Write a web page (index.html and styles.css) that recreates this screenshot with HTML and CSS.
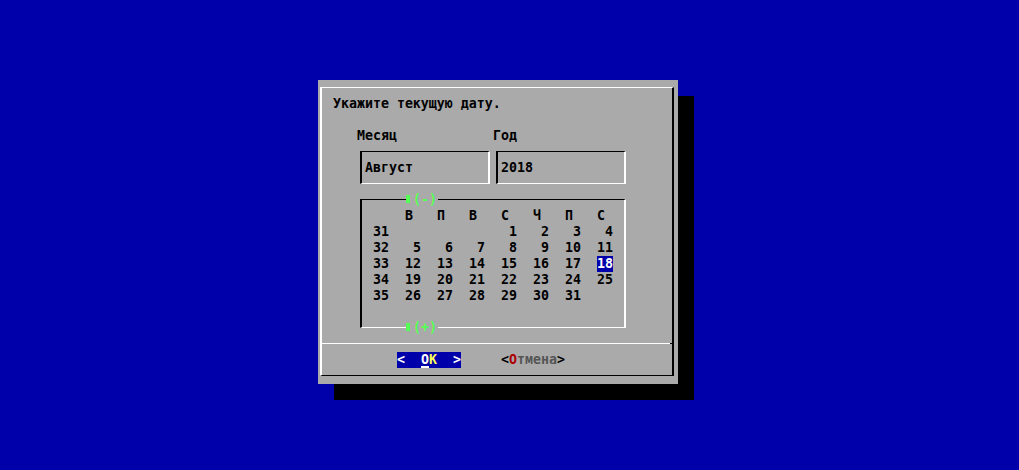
FILE: index.html
```html
<!DOCTYPE html>
<html lang="ru">
<head>
<meta charset="utf-8">
<title>Календарь</title>
<link rel="stylesheet" href="styles.css">
</head>
<body>
<div class="screen">
  <div class="dialog">
    <div class="frame">
      <div class="title">Укажите текущую дату.</div>
      <div class="labels"><span class="label-month">Месяц</span><span class="label-year">Год</span></div>
      <div class="fields">
        <div class="field">Август</div>
        <div class="field">2018</div>
      </div>
      <div class="calendar">
        <div class="scroll scroll-top"><span class="blk"></span><span>(-)</span></div>
        <div class="cal-grid">
          <span></span><span class="hd">В</span><span class="hd">П</span><span class="hd">В</span><span class="hd">С</span><span class="hd">Ч</span><span class="hd">П</span><span class="hd">С</span>
          <span>31</span><span></span><span></span><span></span><span>1</span><span>2</span><span>3</span><span>4</span>
          <span>32</span><span>5</span><span>6</span><span>7</span><span>8</span><span>9</span><span>10</span><span>11</span>
          <span>33</span><span>12</span><span>13</span><span>14</span><span>15</span><span>16</span><span>17</span><span><span class="sel">18</span></span>
          <span>34</span><span>19</span><span>20</span><span>21</span><span>22</span><span>23</span><span>24</span><span>25</span>
          <span>35</span><span>26</span><span>27</span><span>28</span><span>29</span><span>30</span><span>31</span><span></span>
        </div>
        <div class="scroll scroll-bottom"><span class="blk"></span><span>(+)</span></div>
      </div>
      <div class="separator"></div>
      <div class="buttons">
        <span class="btn btn-ok">&lt;  <span class="cursor">O</span><span class="hot-ok">K</span>  &gt;</span>
        <span class="btn btn-cancel">&lt;<span class="hot">О</span><span class="dim">тмена</span>&gt;</span>
      </div>
    </div>
  </div>
</div>
</body>
</html>
```

FILE: styles.css
```css
html, body {
  margin: 0;
  padding: 0;
}

body {
  background: #0000aa;
  width: 1019px;
  height: 470px;
  overflow: hidden;
  font-family: "DejaVu Sans Mono", "Liberation Mono", monospace;
  font-weight: bold;
  font-size: 13.28px;
  line-height: 16px;
  color: #000;
}

.screen {
  padding: 80px 0 0 318px;
}

.dialog {
  width: 360px;
  height: 304px;
  box-sizing: border-box;
  background: #aaaaaa;
  box-shadow: 16px 16px 0 0 #000;
  padding: 7px 0 0 2px;
}

.frame {
  width: 354px;
  height: 289px;
  box-sizing: border-box;
  border-style: solid;
  border-width: 1px 2px;
  border-color: #fff #000 #000 #fff;
}

.title {
  margin: 8px 0 0 11px;
  height: 16px;
  white-space: pre;
}

.labels {
  margin: 16px 0 0 35px;
  height: 16px;
  display: flex;
}

.label-month {
  width: 136px;
}

.fields {
  margin: 7px 0 0 38px;
  display: flex;
  gap: 6px;
}

.field {
  width: 130px;
  height: 33px;
  box-sizing: border-box;
  border-style: solid;
  border-width: 1px 2px;
  border-color: #000 #fff #fff #000;
  padding: 8px 0 0 3px;
}

.calendar {
  position: relative;
  margin: 15px 0 0 38px;
  width: 266px;
  height: 129px;
  box-sizing: border-box;
  border-style: solid;
  border-width: 1px 2px;
  border-color: #000 #fff #fff #000;
  padding-top: 8px;
}

.cal-grid {
  display: grid;
  grid-template-columns: 27px repeat(7, 32px);
  grid-auto-rows: 16px;
  text-align: right;
}

.hd {
  padding-right: 8px;
}

.sel {
  display: inline-block;
  height: 16px;
  background: #0000aa;
  color: #fff;
}

.scroll {
  position: absolute;
  left: 44px;
  width: 32px;
  height: 16px;
  display: flex;
  align-items: flex-start;
  background: #aaaaaa;
  color: #55ff55;
}

.scroll-top {
  top: -8px;
}

.scroll-bottom {
  bottom: -9px;
}

.blk {
  width: 4px;
  height: 8px;
  margin: 3px 3px 0 0;
  background: #55ff55;
}

.separator {
  margin-top: 15px;
  height: 1px;
  background: linear-gradient(to right, #fff 348px, #000 348px);
}

.buttons {
  margin: 8px 0 0 75px;
  height: 16px;
  display: flex;
}

.btn {
  white-space: pre;
  height: 16px;
}

.btn-ok {
  width: 64px;
  background: #0000aa;
  color: #fff;
}

.cursor {
  display: inline-block;
  height: 16px;
  background: linear-gradient(#fff, #fff) left bottom / 100% 2px no-repeat;
}

.hot-ok {
  color: #ffff55;
}

.btn-cancel {
  margin-left: 40px;
}

.hot {
  color: #aa0000;
}

.dim {
  color: #555555;
}
```
